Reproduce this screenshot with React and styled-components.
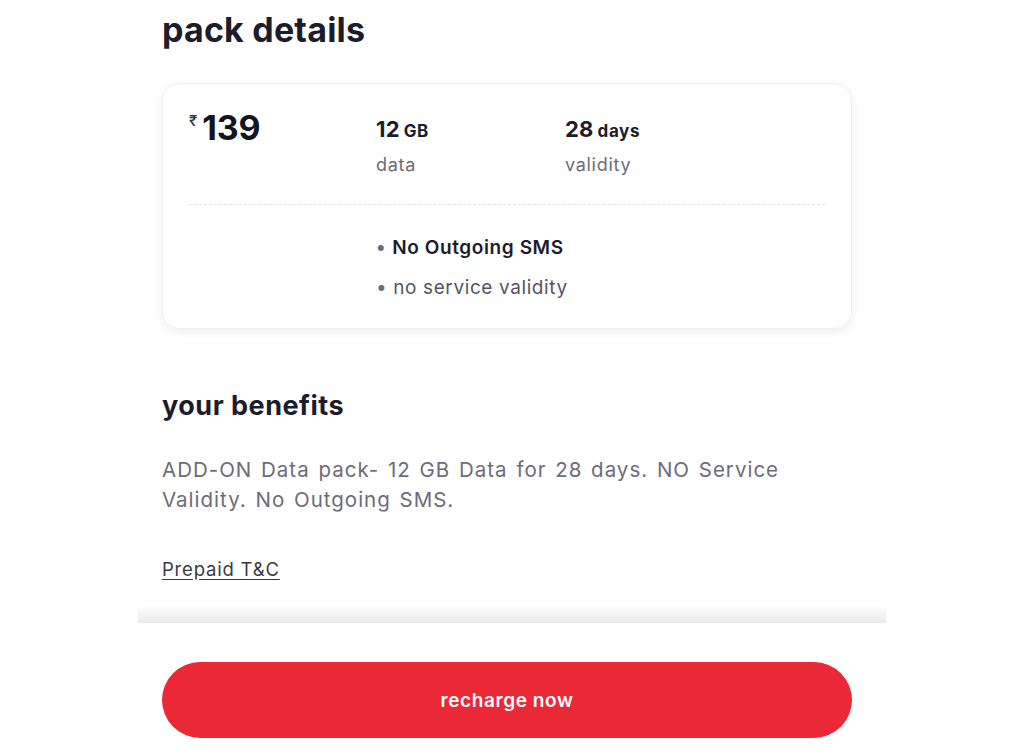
import React from "react"
import styled, { createGlobalStyle } from "styled-components"

const GlobalStyle = createGlobalStyle`
    body{
        margin: 0;
        background: #ffffff;
        font-family: Inter, "Noto Sans", sans-serif;
        color: #1c1c2b;
    }
`

const Page = styled.div`
    width: 748px;
    margin: 0 auto;
    background: #ffffff;
`

const Content = styled.main`
    padding: 9px 34px 0 24px;
`

const Title = styled.h1`
    margin: 0;
    font-size: 34px;
    line-height: 42px;
    font-weight: 700;
    letter-spacing: 0.2px;
    color: #1c1c2b;
`

const Card = styled.section`
    margin-top: 32px;
    padding: 24px 26px 28px 26px;
    border-radius: 18px;
    border: 1px solid #f0f0f2;
    box-shadow: 0 3px 10px rgba(0, 0, 0, 0.07);
`

const TopRow = styled.div`
    display: grid;
    grid-template-columns: 187px 189px 1fr;
    align-items: start;
`

const Price = styled.div`
    display: flex;
    align-items: flex-start;
    font-size: 34px;
    line-height: 40px;
    font-weight: 700;
    letter-spacing: -0.1px;
    color: #141420;
`

const Rupee = styled.span`
    font-size: 15px;
    line-height: 18px;
    font-weight: 500;
    margin: 4px 5px 0 0;
    color: #333340;
`

const Stat = styled.div`
    padding-top: 7px;
`

const StatValue = styled.div`
    font-size: 22px;
    line-height: 28px;
    font-weight: 700;
    letter-spacing: 0.2px;
    color: #1c1c2b;
`

const StatUnit = styled.span`
    font-size: 17px;
    margin-left: 4px;
    letter-spacing: 0.6px;
`

const StatLabel = styled.div`
    margin-top: 8px;
    font-size: 18px;
    line-height: 24px;
    letter-spacing: 0.7px;
    color: #6c6c78;
`

const Divider = styled.hr`
    margin: 27px 0 0 0;
    border: none;
    border-top: 1px dashed #e2e2e6;
`

const Notes = styled.ul`
    list-style: none;
    margin: 31px 0 0 187px;
    padding: 0;
    display: flex;
    flex-direction: column;
    gap: 16px;
`

const Note = styled.li`
    font-size: 19px;
    line-height: 24px;
    letter-spacing: 0.6px;
    font-weight: ${p => (p.$strong ? 600 : 400)};
    color: ${p => (p.$strong ? "#1c1c2b" : "#55555f")};
    &::before{
        content: "•";
        margin-right: 6px;
        color: #6c6c78;
    }
`

const SubTitle = styled.h2`
    margin: 60px 0 0 0;
    font-size: 27px;
    line-height: 34px;
    font-weight: 700;
    letter-spacing: 0.5px;
    color: #1c1c2b;
`

const Description = styled.p`
    margin: 32px 0 0 0;
    max-width: 640px;
    font-size: 20.5px;
    line-height: 30px;
    letter-spacing: 1px;
    word-spacing: 2px;
    color: #6c6c78;
`

const TermsLink = styled.a`
    display: inline-block;
    margin-top: 42px;
    font-size: 18.5px;
    line-height: 24px;
    letter-spacing: 0.8px;
    color: #3a3a46;
    text-decoration: underline;
    text-underline-offset: 3px;
`

const Footer = styled.footer`
    margin-top: 24px;
`

const FooterShade = styled.div`
    height: 18px;
    background: linear-gradient(to bottom, #ffffff, #ebebeb);
`

const FooterBody = styled.div`
    padding: 39px 34px 17px 24px;
`

const RechargeButton = styled.button`
    display: block;
    width: 100%;
    height: 76px;
    border: none;
    border-radius: 40px;
    background: #ea2836;
    color: #ffffff;
    font-family: Inter, "Noto Sans", sans-serif;
    font-size: 19px;
    font-weight: 600;
    letter-spacing: 0.6px;
    cursor: pointer;
`

const App = () =>
    <>
        <GlobalStyle />
        <Page>
            <Content>
                <Title>pack details</Title>
                <Card>
                    <TopRow>
                        <Price><Rupee>₹</Rupee>139</Price>
                        <Stat>
                            <StatValue>12<StatUnit>GB</StatUnit></StatValue>
                            <StatLabel>data</StatLabel>
                        </Stat>
                        <Stat>
                            <StatValue>28<StatUnit>days</StatUnit></StatValue>
                            <StatLabel>validity</StatLabel>
                        </Stat>
                    </TopRow>
                    <Divider />
                    <Notes>
                        <Note $strong>No Outgoing SMS</Note>
                        <Note>no service validity</Note>
                    </Notes>
                </Card>

                <SubTitle>your benefits</SubTitle>
                <Description>
                    ADD-ON Data pack- 12 GB Data for 28 days. NO Service Validity. No Outgoing SMS.
                </Description>
                <TermsLink href="#">Prepaid T&amp;C</TermsLink>
            </Content>
            <Footer>
                <FooterShade />
                <FooterBody>
                    <RechargeButton>recharge now</RechargeButton>
                </FooterBody>
            </Footer>
        </Page>
    </>

export default App
